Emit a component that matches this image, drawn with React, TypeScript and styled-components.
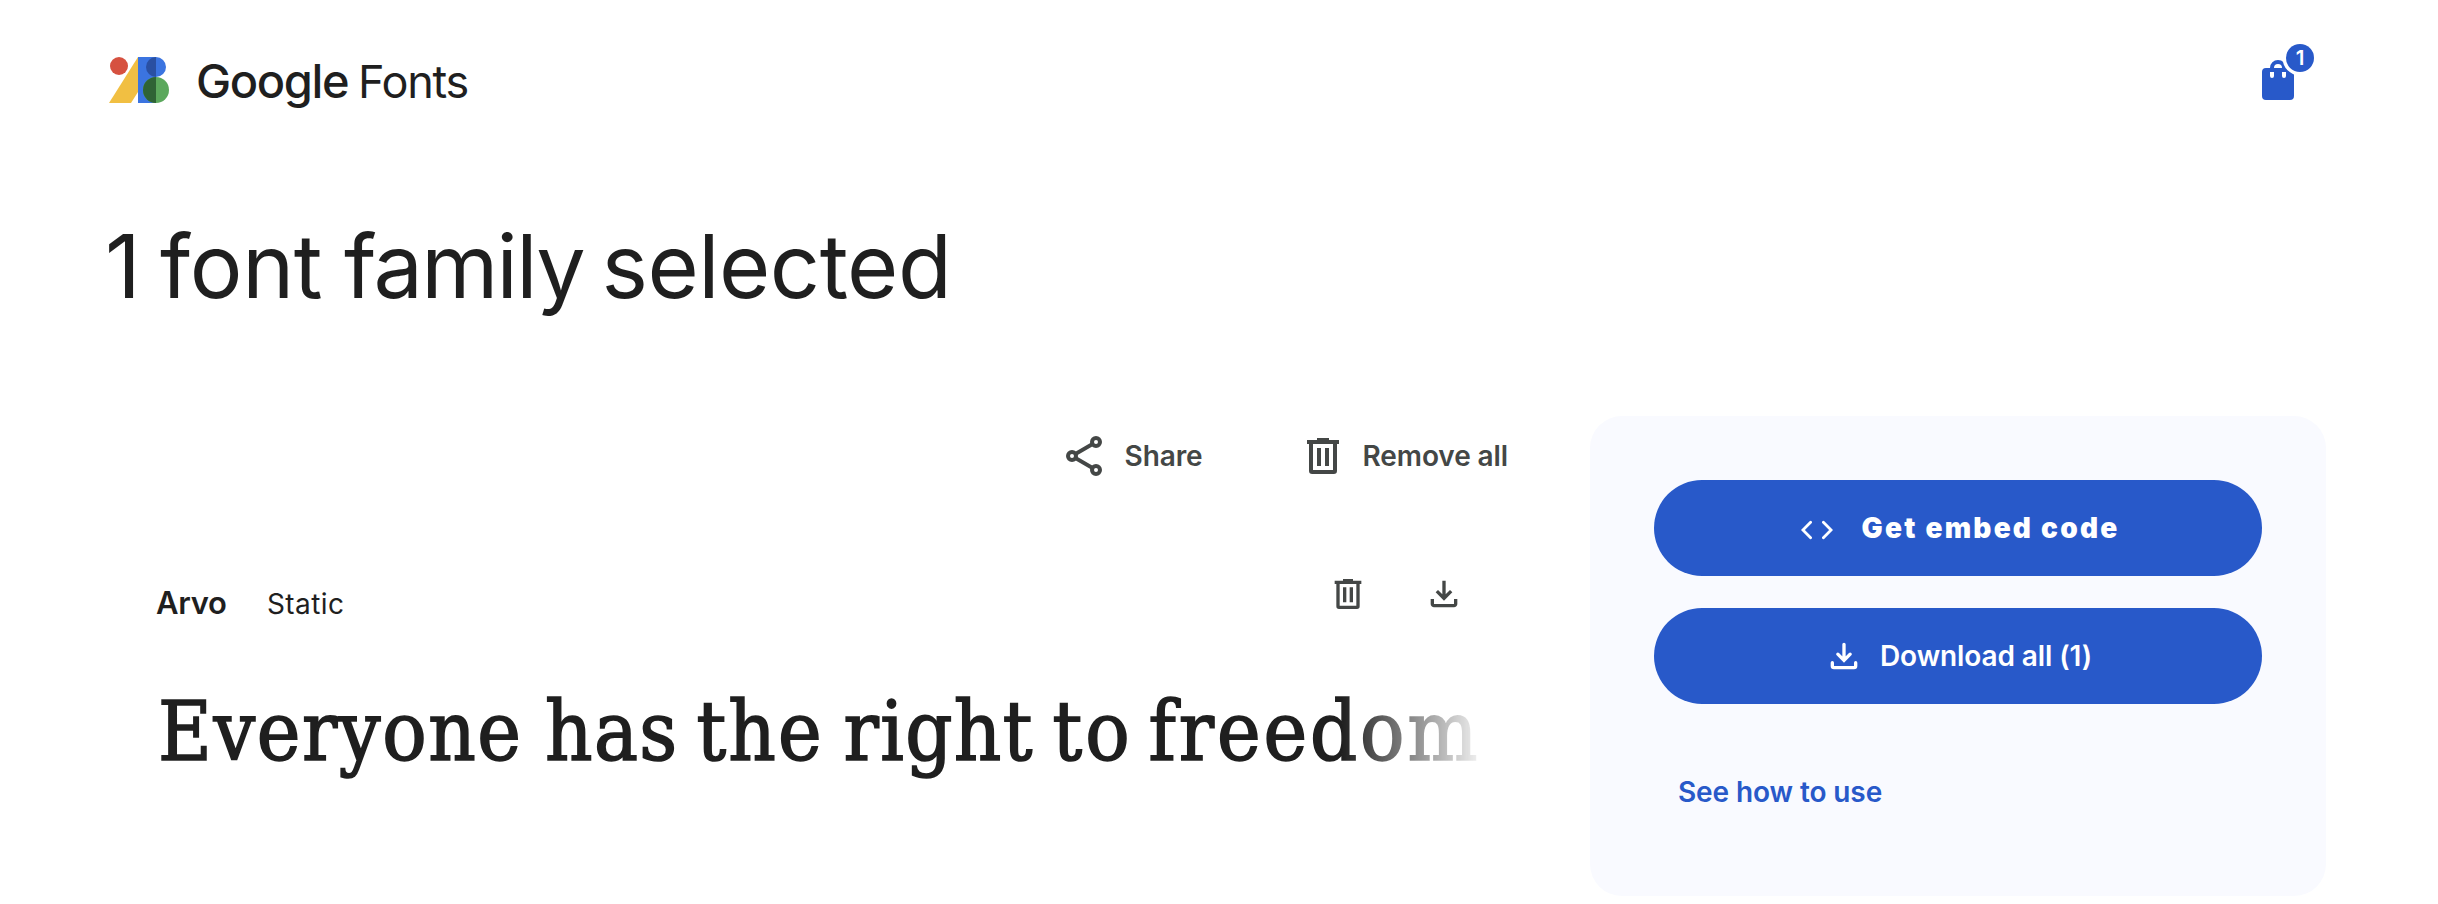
import React from 'react';
import styled, { createGlobalStyle } from 'styled-components';

const GlobalStyle = createGlobalStyle`
  *, *::before, *::after { box-sizing: border-box; }
  html, body { margin: 0; background: #fff; }
  body { font-family: Inter, "Open Sans", sans-serif; color: #1f1f1f; }
  button, a { font: inherit; color: inherit; }
`;

const Page = styled.div`
  min-height: 904px;
  padding: 0 112px 0 108px;
  overflow: hidden;
`;

const Header = styled.header`
  display: flex;
  align-items: center;
  justify-content: space-between;
  height: 160px;
  padding-right: 24px;
`;

const Brand = styled.div`
  display: flex;
  align-items: center;
`;

const BrandMark = styled.svg`
  display: block;
  width: 62px;
  height: 46px;
  margin-right: 26px;
`;

const BrandText = styled.div`
  display: flex;
  align-items: baseline;
  line-height: 56px;
  padding-top: 3px;
`;

const BrandGoogle = styled.span`
  width: 162px;
  font-size: 47px;
  font-weight: 500;
  letter-spacing: -1.4px;
`;

const BrandFonts = styled.span`
  font-size: 45px;
  letter-spacing: -1.3px;
`;

const BagButton = styled.button`
  position: relative;
  width: 48px;
  height: 48px;
  padding: 0;
  border: 0;
  background: none;
`;

const Badge = styled.span`
  position: absolute;
  top: -12px;
  right: -12px;
  width: 28px;
  height: 28px;
  border-radius: 50%;
  background: #2859c9;
  box-shadow: 0 0 0 3.5px #fff;
  color: #fff;
  font-size: 20.5px;
  font-weight: 600;
  line-height: 27px;
  text-align: center;
`;

const Title = styled.h1`
  display: flex;
  margin: 54px 0 0 -3px;
  font-size: 88px;
  font-weight: 400;
  line-height: 104px;
`;

const Word = styled.span<{ $width: number; $track: number }>`
  flex: none;
  width: ${p => p.$width}px;
  letter-spacing: ${p => p.$track}px;
  word-spacing: -12px;
  white-space: pre;
`;

const Main = styled.main`
  display: grid;
  grid-template-columns: 1400px 736px;
  column-gap: 82px;
  margin-top: 98px;
`;

const Families = styled.section`
  min-width: 0;
`;

const Actions = styled.div`
  display: flex;
  justify-content: flex-end;
  align-items: center;
  gap: 96px;
  height: 80px;
`;

const TextAction = styled.button<{ $gap: number }>`
  display: flex;
  align-items: center;
  gap: ${p => p.$gap}px;
  padding: 0;
  border: 0;
  background: none;
  color: #444746;
  font-size: 28px;
  font-weight: 600;
  letter-spacing: -0.1px;
  line-height: 40px;
`;

const CardHeader = styled.div`
  display: flex;
  align-items: center;
  height: 60px;
  margin-top: 68px;
  padding: 0 44px 0 48px;
`;

const FamilyLabel = styled.div`
  display: flex;
  align-items: baseline;
  flex: 1;
  padding-top: 18px;
  line-height: 40px;
`;

const FamilyName = styled.span`
  width: 111px;
  font-size: 31px;
  font-weight: 600;
  letter-spacing: -0.3px;
`;

const FamilyKind = styled.span`
  font-size: 28px;
  letter-spacing: 0.4px;
`;

const CardTools = styled.div`
  display: flex;
  gap: 56px;
`;

const IconButton = styled.button`
  display: flex;
  padding: 0;
  border: 0;
  background: none;
  color: #444746;
`;

const Sample = styled.p`
  display: flex;
  margin: 48px 28px 0 50px;
  overflow: hidden;
  font-family: "DejaVu Serif Condensed", "DejaVu Serif", serif;
  font-stretch: condensed;
  font-size: 82px;
  line-height: 120px;
  -webkit-text-stroke: 1.6px currentColor;
  mask-image: linear-gradient(to right, #000 calc(100% - 138px), rgba(0, 0, 0, 0.06) 100%);
`;

const Panel = styled.aside`
  display: flex;
  flex-direction: column;
  height: 480px;
  padding: 64px;
  border-radius: 32px;
  background: #f9faff;
`;

const PillButton = styled.button<{ $gap: number; $weight: number; $track: number }>`
  display: flex;
  align-items: center;
  justify-content: center;
  gap: ${p => p.$gap}px;
  height: 96px;
  padding: 0;
  border: 0;
  border-radius: 48px;
  background: #2859c9;
  color: #fff;
  font-size: 28px;
  font-weight: ${p => p.$weight};
  letter-spacing: ${p => p.$track}px;

  & + & { margin-top: 32px; }
`;

const CodeSvg = styled.svg`
  width: 32px;
  height: 20px;
  margin: 4px 0 0 4px;
`;

const HelpLink = styled.a`
  margin: 64px 0 0 24px;
  color: #2859c9;
  font-size: 28px;
  font-weight: 600;
  letter-spacing: -0.1px;
  line-height: 48px;
  text-decoration: none;
`;

const FontsMark = () => (
  <BrandMark viewBox="108 57 62 46" aria-hidden>
    <circle cx="119" cy="66" r="9" fill="#d65140" />
    <path d="M138 57v35l-7 11h-22z" fill="#f1bf42" />
    <path d="M138 57h18v46h-18z" fill="#3b74e0" />
    <circle cx="156" cy="67" r="10" fill="#3b74e0" />
    <path d="M156 57a10 10 0 0 0 0 20z" fill="#2a50a2" />
    <circle cx="156" cy="90" r="13" fill="#5ba85c" />
    <path d="M156 77a13 13 0 0 0 0 26z" fill="#2f6335" />
  </BrandMark>
);

const BagIcon = () => (
  <svg width="48" height="48" viewBox="0 0 48 48" fill="#2859c9" fillRule="evenodd" aria-hidden>
    <path d="M16 12a8 8 0 0 1 16 0h4a4 4 0 0 1 4 4v24a4 4 0 0 1-4 4H12a4 4 0 0 1-4-4V16a4 4 0 0 1 4-4zM20 12h8a4 4 0 0 0-8 0zM16 16v4a2 2 0 0 0 4 0v-4zM28 16v4a2 2 0 0 0 4 0v-4z" />
  </svg>
);

const ShareIcon = () => (
  <svg width="48" height="48" viewBox="0 0 24 24" fill="none" stroke="currentColor" strokeWidth="2" aria-hidden>
    <circle cx="18" cy="5" r="2" />
    <circle cx="6" cy="12" r="2" />
    <circle cx="18" cy="19" r="2" />
    <path d="M7.7 11l8.6-5M7.7 13l8.6 5" strokeWidth="1.9" />
  </svg>
);

const TrashIcon = ({ size }: { size: number }) => (
  <svg width={size} height={size} viewBox="0 0 24 24" fill="currentColor" fillRule="evenodd" aria-hidden>
    <path d="M9 3h6v1h5v2h-1v13.4q0 1.6-1.6 1.6H6.6Q5 21 5 19.4V6H4V4h5zM7 6v13h10V6zM9 8v9h2V8zM13 8v9h2V8z" />
  </svg>
);

const DownloadIcon = () => (
  <svg width="40" height="40" viewBox="0 0 24 24" fill="currentColor" aria-hidden>
    <path d="M12 16l-5-5 1.4-1.45 2.6 2.6V4h2v8.15l2.6-2.6L17 11zM6 20q-.825 0-1.413-.587T4 18v-3h2v3h12v-3h2v3q0 .825-.587 1.413T18 20z" />
  </svg>
);

const RoundDownloadIcon = () => (
  <svg width="40" height="40" viewBox="0 0 24 24" fill="none" stroke="currentColor" strokeWidth="2" strokeLinecap="round" aria-hidden>
    <path d="M12 5v9M8.3 10.9l3.7 3.7 3.7-3.7" />
    <path d="M5 16v2q0 1 1 1h12q1 0 1-1v-2" />
  </svg>
);

const CodeIcon = () => (
  <CodeSvg viewBox="0 0 32 20" fill="none" stroke="currentColor" strokeWidth="2.8" strokeLinecap="round" aria-hidden>
    <path d="M9.6 2.2L1.9 10l7.7 7.8M22.4 2.2l7.7 7.8-7.7 7.8" />
  </CodeSvg>
);

const titleWords = [
  { text: '1 ', width: 55, track: 0 },
  { text: 'font ', width: 184, track: -0.3 },
  { text: 'family ', width: 257.5, track: -1.7 },
  { text: 'selected', width: 350, track: -0.5 },
];

const sampleWords = [
  { text: 'Everyone ', width: 387, track: 1.6 },
  { text: 'has ', width: 151.5, track: 1.4 },
  { text: 'the ', width: 147, track: 2.2 },
  { text: 'right ', width: 209, track: 1.4 },
  { text: 'to ', width: 96, track: 3 },
  { text: 'freedom', width: 332, track: 2.9 },
];

export default function App() {
  return (
    <>
      <GlobalStyle />
      <Page>
        <Header>
          <Brand>
            <FontsMark />
            <BrandText>
              <BrandGoogle>Google</BrandGoogle>
              <BrandFonts>Fonts</BrandFonts>
            </BrandText>
          </Brand>
          <BagButton aria-label="Selected families">
            <BagIcon />
            <Badge>1</Badge>
          </BagButton>
        </Header>
        <Title>
          {titleWords.map(w => (
            <Word key={w.text} $width={w.width} $track={w.track}>{w.text}</Word>
          ))}
        </Title>
        <Main>
          <Families>
            <Actions>
              <TextAction $gap={17}><ShareIcon />Share</TextAction>
              <TextAction $gap={16}><TrashIcon size={48} />Remove all</TextAction>
            </Actions>
            <CardHeader>
              <FamilyLabel>
                <FamilyName>Arvo</FamilyName>
                <FamilyKind>Static</FamilyKind>
              </FamilyLabel>
              <CardTools>
                <IconButton aria-label="Remove"><TrashIcon size={40} /></IconButton>
                <IconButton aria-label="Download"><DownloadIcon /></IconButton>
              </CardTools>
            </CardHeader>
            <Sample>
              {sampleWords.map(w => (
                <Word key={w.text} $width={w.width} $track={w.track}>{w.text}</Word>
              ))}
            </Sample>
          </Families>
          <Panel>
            <PillButton $gap={29} $weight={900} $track={2.25}><CodeIcon />Get embed code</PillButton>
            <PillButton $gap={16} $weight={600} $track={-0.1}><RoundDownloadIcon />Download all (1)</PillButton>
            <HelpLink>See how to use</HelpLink>
          </Panel>
        </Main>
      </Page>
    </>
  );
}
